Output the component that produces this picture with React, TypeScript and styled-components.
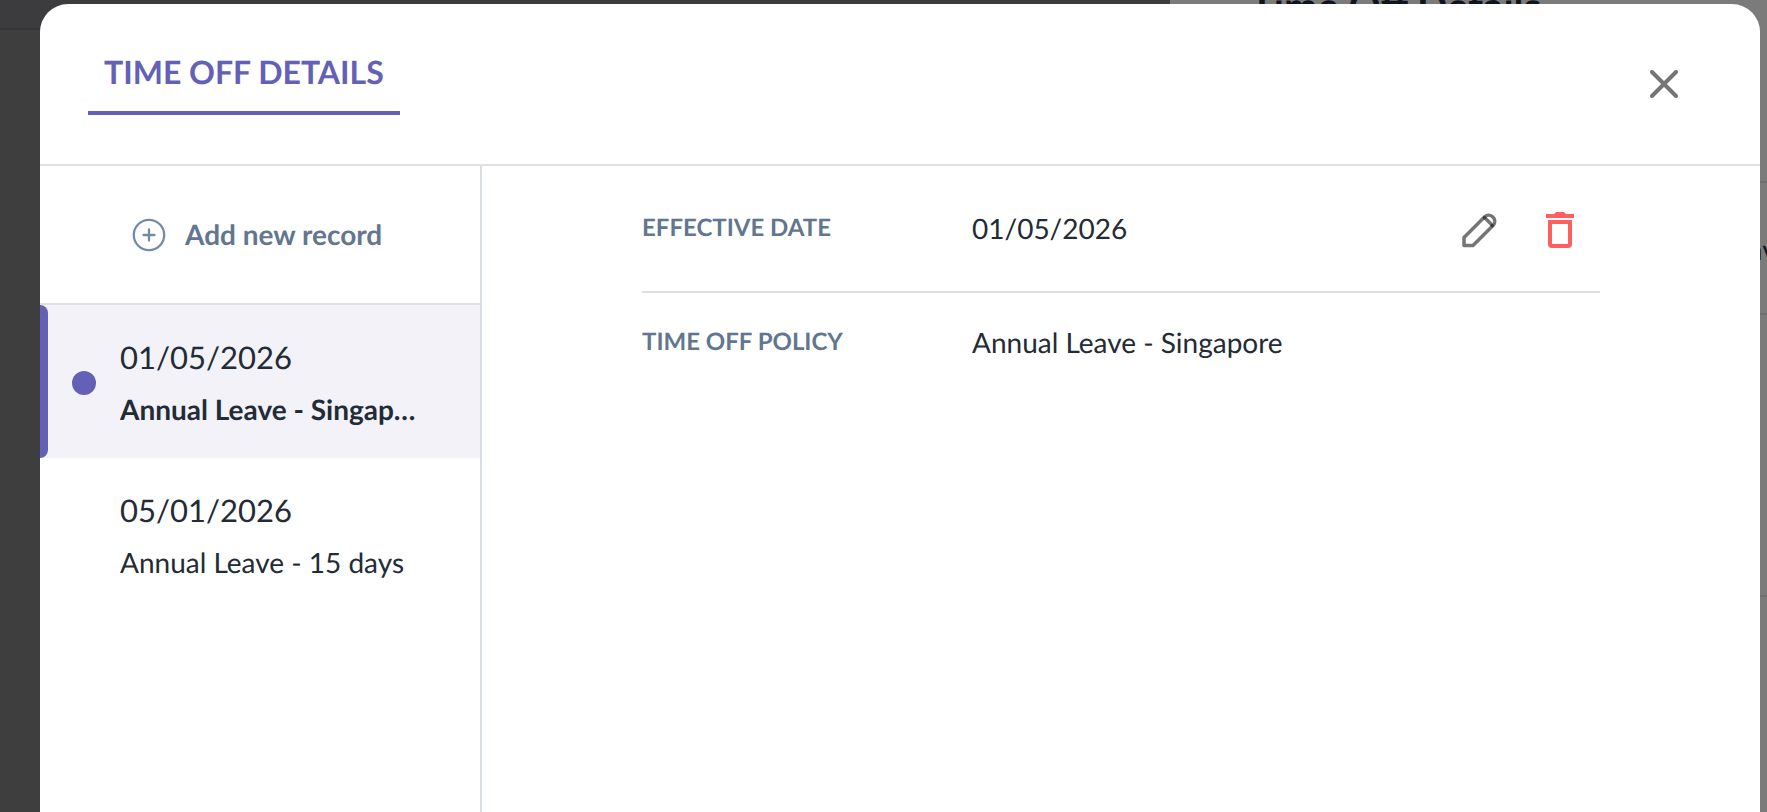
import React from "react";
import styled, { createGlobalStyle } from "styled-components";

const GlobalStyle = createGlobalStyle`
  *, *::before, *::after { box-sizing: border-box; }
  html, body, #root { height: 100%; }
  body { margin: 0; overflow: hidden; background: #3e3e3e; color: #222b36; font-family: Lato, "Liberation Sans", sans-serif; text-rendering: geometricPrecision; }
  button { font: inherit; color: inherit; background: none; border: 0; padding: 0; cursor: pointer; text-rendering: inherit; }
  h1, h2, p, dl, dt, dd, ul { margin: 0; padding: 0; }
`;

const Page = styled.div`
  position: relative;
  height: 100%;
  overflow: hidden;
`;

const Backdrop = styled.div`
  position: absolute;
  inset: 0;
  display: flex;
  justify-content: flex-end;
  background: #3e3e3e;
`;

const BackStrip = styled.div`
  flex: 1;
  height: 30px;
  background: #3c3c3e;
  border-bottom: 2px solid #363638;
`;

const BackDrawer = styled.div`
  width: 597px;
  overflow: hidden;
  background: #7b7b7b;
`;

const BackTitle = styled.h2`
  height: 197px;
  margin-top: -14px;
  padding-left: 80px;
  border-bottom: 2px solid #6f6f6f;
  color: #11151b;
  font-size: 40px;
  line-height: 40px;
  font-weight: 700;
`;

const BackRow = styled.div<{ $height: number }>`
  display: flex;
  justify-content: flex-end;
  height: ${(p) => p.$height}px;
  padding-top: 42px;
  border-bottom: 2px solid #6f6f6f;
  color: #11151b;
  font-size: 28px;
  line-height: 48px;
`;

const BackValue = styled.span`
  margin-right: -24px;
  white-space: nowrap;
`;

const Dialog = styled.section`
  position: relative;
  display: flex;
  flex-direction: column;
  height: calc(100% - 4px);
  margin: 4px 7px 0 40px;
  overflow: hidden;
  background: #fff;
  border-radius: 28px 28px 0 0;
`;

const Header = styled.header`
  display: flex;
  justify-content: space-between;
  align-items: flex-start;
  padding: 40px 78px 49px 48px;
  border-bottom: 2px solid #e0e0e0;
`;

const Title = styled.h1`
  padding: 10px 16px 21px;
  border-bottom: 4px solid #6460b5;
  color: #6460b5;
  font-size: 32px;
  line-height: 36px;
  font-weight: 700;
`;

const IconButton = styled.button`
  display: flex;
  align-items: center;
  justify-content: center;
  width: 36px;
  height: 36px;
`;

const CloseButton = styled(IconButton)`
  margin-top: 22px;
`;

const Body = styled.div`
  display: flex;
  flex: 1;
  min-height: 0;
`;

const Sidebar = styled.aside`
  flex: none;
  width: 442px;
  border-right: 2px solid #d9dde5;
`;

const AddButton = styled.button`
  display: flex;
  align-items: center;
  justify-content: flex-start;
  gap: 19px;
  width: 100%;
  height: 139px;
  padding-left: 92px;
  border-bottom: 2px solid #e0e0e0;
  color: #627690;
  font-size: 28px;
  font-weight: 700;
`;

const AddText = styled.span`
  padding-bottom: 2px;
`;

const RecordList = styled.ul`
  list-style: none;
`;

const Record = styled.button<{ $selected?: boolean }>`
  position: relative;
  display: grid;
  grid-template-columns: 24px minmax(0, 1fr);
  column-gap: 24px;
  align-items: center;
  width: 100%;
  height: 153px;
  padding: 2px 64px 0 32px;
  text-align: left;
  background: ${(p) => (p.$selected ? "#f3f2f9" : "transparent")};
  font-weight: ${(p) => (p.$selected ? 700 : 400)};

  &::before {
    content: "";
    display: ${(p) => (p.$selected ? "block" : "none")};
    position: absolute;
    inset: 0 auto 0 0;
    width: 8px;
    background: #6460b5;
    border-radius: 0 8px 8px 0;
  }
`;

const Dot = styled.span<{ $selected?: boolean }>`
  width: 24px;
  height: 24px;
  border-radius: 50%;
  background: ${(p) => (p.$selected ? "#6460b5" : "transparent")};
`;

const RecordText = styled.span`
  display: flex;
  flex-direction: column;
  gap: 12px;
`;

const RecordDate = styled.span`
  font-size: 31px;
  line-height: 40px;
  font-weight: 400;
`;

const RecordName = styled.span`
  overflow: hidden;
  text-overflow: ellipsis;
  white-space: nowrap;
  font-size: 28px;
  line-height: 40px;
`;

const Details = styled.dl`
  flex: 1;
  padding: 0 160px;
`;

const DetailRow = styled.div`
  display: flex;
  align-items: center;
  height: 127px;
  border-bottom: 2px solid #e0e0e0;

  &:last-child {
    height: 100px;
    border-bottom: 0;
  }
`;

const Label = styled.dt`
  flex: none;
  width: 330px;
  padding-bottom: 2px;
  color: #627690;
  font-size: 24px;
  line-height: 36px;
  font-weight: 700;
`;

const Value = styled.dd`
  flex: 1;
  padding-bottom: 2px;
  font-size: 28px;
  line-height: 36px;
`;

const Actions = styled.div`
  display: flex;
  gap: 44px;
  padding: 2px 22px 0 0;
`;

const records = [
  { date: "01/05/2026", name: "Annual Leave - Singapore", selected: true },
  { date: "05/01/2026", name: "Annual Leave - 15 days", selected: false },
];

const CloseIcon = () => (
  <svg width="28" height="28" viewBox="0 0 28 28" fill="none" stroke="#757575" strokeWidth="4" strokeLinecap="round" aria-hidden="true">
    <path d="M2 2 26 26M26 2 2 26" />
  </svg>
);

const PlusIcon = () => (
  <svg width="34" height="34" viewBox="0 0 34 34" fill="none" stroke="#768aa8" strokeWidth="2.300" strokeLinecap="round" aria-hidden="true">
    <circle cx="17" cy="17" r="15.200" />
    <path d="M17 11.500v11M11.500 17h11" />
  </svg>
);

const PencilIcon = () => (
  <svg width="36" height="36" viewBox="0 0 36 36" fill="none" aria-hidden="true">
    <path d="M2 25.500 22.500 5C28 -.5 36.500 7.500 31 13.500L11 33.500H2Z" stroke="#757575" strokeWidth="3.500" strokeLinejoin="round" />
    <path d="M22.500 5.500 30.500 13.500" stroke="#757575" strokeWidth="3.500" />
    <circle cx="22.500" cy="5.800" r="1.800" fill="#3c3c3c" />
    <circle cx="30.200" cy="13.500" r="1.800" fill="#3c3c3c" />
  </svg>
);

const TrashIcon = () => (
  <svg width="28" height="36" viewBox="0 0 28 36" fill="#ff5f5f" aria-hidden="true">
    <path d="M0 2H8L10 0H18L20 2H28V6H0Z" />
    <path fillRule="evenodd" d="M2 8H26V32Q26 36 22 36H6Q2 36 2 32ZM6 12V32H22V12Z" />
  </svg>
);

export default function App() {
  return (
    <Page>
      <GlobalStyle />
      <Backdrop aria-hidden="true">
        <BackStrip />
        <BackDrawer>
          <BackTitle>Time Off Details</BackTitle>
          <BackRow $height={132}>
            <BackValue>Annual Leave</BackValue>
          </BackRow>
          <BackRow $height={282} />
        </BackDrawer>
      </Backdrop>
      <Dialog role="dialog" aria-labelledby="dialog-title">
        <Header>
          <Title id="dialog-title">TIME OFF DETAILS</Title>
          <CloseButton type="button" aria-label="Close">
            <CloseIcon />
          </CloseButton>
        </Header>
        <Body>
          <Sidebar>
            <AddButton type="button">
              <PlusIcon />
              <AddText>Add new record</AddText>
            </AddButton>
            <RecordList>
              {records.map((record) => (
                <li key={record.date}>
                  <Record type="button" $selected={record.selected}>
                    <Dot $selected={record.selected} />
                    <RecordText>
                      <RecordDate>{record.date}</RecordDate>
                      <RecordName>{record.name}</RecordName>
                    </RecordText>
                  </Record>
                </li>
              ))}
            </RecordList>
          </Sidebar>
          <Details>
            <DetailRow>
              <Label>EFFECTIVE DATE</Label>
              <Value>01/05/2026</Value>
              <Actions>
                <IconButton type="button" aria-label="Edit record">
                  <PencilIcon />
                </IconButton>
                <IconButton type="button" aria-label="Delete record">
                  <TrashIcon />
                </IconButton>
              </Actions>
            </DetailRow>
            <DetailRow>
              <Label>TIME OFF POLICY</Label>
              <Value>Annual Leave - Singapore</Value>
            </DetailRow>
          </Details>
        </Body>
      </Dialog>
    </Page>
  );
}
